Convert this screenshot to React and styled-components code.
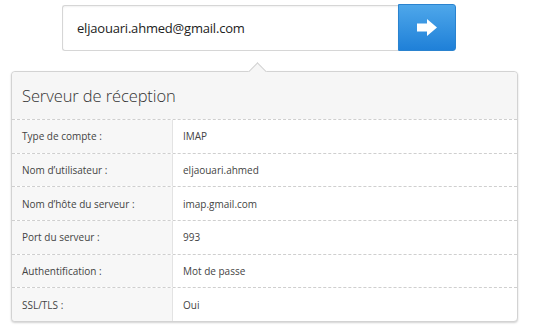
import React from "react";
import styled, { createGlobalStyle } from "styled-components";

const Global = createGlobalStyle`
  html, body { margin: 0; padding: 0; background: #ffffff; }
  body { font-family: "Open Sans", "Noto Sans", Arial, sans-serif; color: #333; }
  * { box-sizing: border-box; }
`;

const Page = styled.div`
  width: 533px;
  height: 336px;
  padding-top: 4px;
  overflow: hidden;
`;

const SearchBar = styled.div`
  display: flex;
  margin-left: 62px;
  width: 394px;
  height: 47px;
`;

const EmailBox = styled.div`
  flex: 1;
  display: flex;
  align-items: center;
  margin-top: 1px;
  padding-left: 14px;
  border: 1px solid #d6d6d6;
  border-right: none;
  border-radius: 3px 0 0 3px;
  box-shadow: inset 0 1px 2px rgba(0, 0, 0, 0.06);
  font-size: 13px;
  letter-spacing: -0.2px;
  color: #222;
`;

const GoButton = styled.button`
  width: 58px;
  height: 47px;
  border: 1px solid #2a83cf;
  border-radius: 0 3px 3px 0;
  background: linear-gradient(#4ea7ea, #1f80d8);
  display: flex;
  align-items: center;
  justify-content: center;
  padding: 0;
  cursor: pointer;
`;

const Panel = styled.div`
  position: relative;
  margin: 20px 15px 0 11px;
  border: 1px solid #d3d3d3;
  border-radius: 4px;
  box-shadow: 0 1px 2px rgba(0, 0, 0, 0.18);
  background: #fff;

  &::before {
    content: "";
    position: absolute;
    top: -7px;
    left: 239px;
    width: 12px;
    height: 12px;
    background: #f6f6f6;
    border-top: 1px solid #d3d3d3;
    border-left: 1px solid #d3d3d3;
    transform: rotate(45deg);
  }
`;

const Header = styled.div`
  position: relative;
  height: 47px;
  display: flex;
  align-items: center;
  padding-left: 10px;
  background: #f6f6f6;
  border-radius: 4px 4px 0 0;
  font-size: 16.5px;
  font-weight: 300;
  letter-spacing: -0.1px;
  color: #333;
`;

const Row = styled.div`
  display: flex;
  height: 33.7px;
  border-top: 1px dashed #cfcfcf;
  font-size: 10px;
  &:last-child > div:first-child {
    border-bottom-left-radius: 4px;
  }
`;

const Label = styled.div`
  width: 161px;
  flex: none;
  display: flex;
  align-items: center;
  padding-left: 10px;
  background: #f7f7f7;
  border-right: 1px solid #e3e3e3;
  color: #444;
`;

const Value = styled.div`
  flex: 1;
  display: flex;
  align-items: center;
  padding-left: 10px;
  color: #444;
`;

const rows = [
  ["Type de compte :", "IMAP"],
  ["Nom d’utilisateur :", "eljaouari.ahmed"],
  ["Nom d’hôte du serveur :", "imap.gmail.com"],
  ["Port du serveur :", "993"],
  ["Authentification :", "Mot de passe"],
  ["SSL/TLS :", "Oui"],
];

export default function App() {
  return (
    <Page>
      <Global />
      <SearchBar>
        <EmailBox>eljaouari.ahmed@gmail.com</EmailBox>
        <GoButton aria-label="Suivant">
          <svg width="20" height="17" viewBox="0 0 20 17">
            <path d="M0 4.5 H10 V0 L20 8.5 L10 17 V12.5 H0 Z" fill="#fff" />
          </svg>
        </GoButton>
      </SearchBar>
      <Panel>
        <Header>Serveur de réception</Header>
        {rows.map(([l, v]) => (
          <Row key={l}>
            <Label>{l}</Label>
            <Value>{v}</Value>
          </Row>
        ))}
      </Panel>
    </Page>
  );
}
